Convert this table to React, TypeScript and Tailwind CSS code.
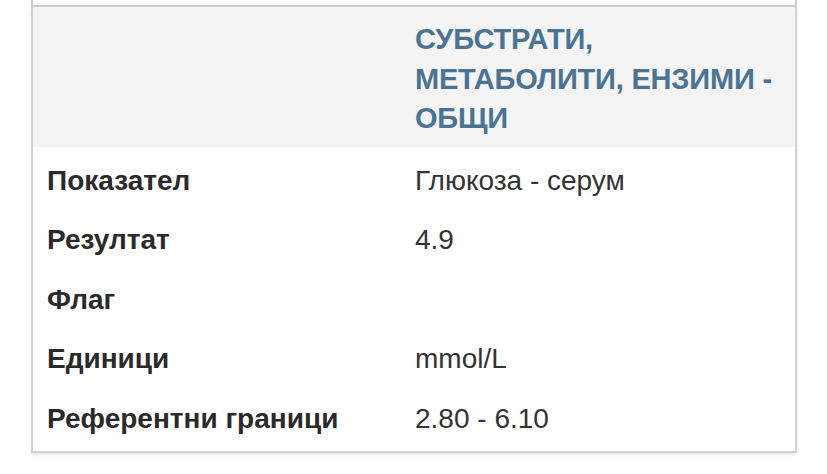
import React from "react";

const rows: [string, string][] = [
  ["Показател", "Глюкоза - серум"],
  ["Резултат", "4.9"],
  ["Флаг", ""],
  ["Единици", "mmol/L"],
  ["Референтни граници", "2.80 - 6.10"],
];

export default function App() {
  return (
    <div
      className="w-[827px] h-[474px] bg-white overflow-hidden"
      style={{ fontFamily: '"Liberation Sans", Arial, sans-serif' }}
    >
      <div className="ml-[31px] w-[766px] h-[7px] border-x-2 border-b-2 border-[#cdcdcd] bg-white" />
      <div className="ml-[31px] w-[766px] border-x-2 border-b-2 border-[#d2d2d2] shadow-[0_2px_3px_rgba(0,0,0,0.10)]">
        <div className="grid grid-cols-[382px_1fr] bg-[#f4f4f4] h-[140px] pt-[13px]">
          <div />
          <div className="text-[29px] leading-[39.5px] font-bold text-[#4b7393] tracking-[-0.2px]">
            СУБСТРАТИ,
            <br />
            МЕТАБОЛИТИ, ЕНЗИМИ -
            <br />
            ОБЩИ
          </div>
        </div>
        <div className="pt-[4px] pb-[2px] bg-white">
          {rows.map(([k, v]) => (
            <div key={k} className="grid grid-cols-[382px_1fr] h-[59.5px] items-center">
              <div className="pl-[14px] text-[28px] font-bold text-[#2a2a2a] leading-[32px]">{k}</div>
              <div className="text-[28px] text-[#333333] leading-[32px]">{v}</div>
            </div>
          ))}
        </div>
      </div>
    </div>
  );
}
